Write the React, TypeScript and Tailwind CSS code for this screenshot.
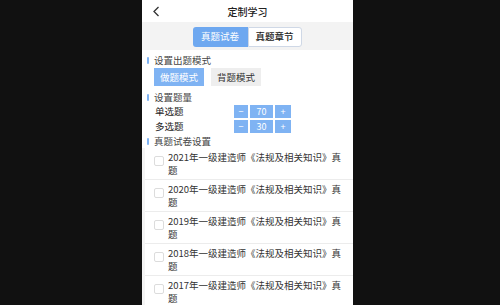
import React from "react";

const papers = [2021, 2020, 2019, 2018, 2017];

function Stepper({ value }: { value: number }) {
  return (
    <div className="flex gap-[2px] text-[9px] leading-[13px] text-white">
      <div className="w-[14px] h-[13px] bg-[#7fb3f3] text-center">−</div>
      <div className="w-[23px] h-[13px] bg-[#7fb3f3] text-center">{value}</div>
      <div className="w-[16px] h-[13px] bg-[#7fb3f3] text-center">+</div>
    </div>
  );
}

function Heading({ title }: { title: string }) {
  return (
    <div className="flex items-center h-[14px] pl-[5px]">
      <div className="w-[2px] h-[7px] bg-[#7fb3f3] rounded-sm" />
      <span className="ml-[5px] text-[9.5px] leading-[14px] text-[#444]">{title}</span>
    </div>
  );
}

export default function App() {
  return (
    <div
      className="w-[500px] h-[305px] bg-[#111] overflow-hidden pl-[142px]"
      style={{ fontFamily: '"Noto Sans CJK SC", "Noto Sans", sans-serif' }}
    >
      <div className="w-[211px] h-[305px] bg-white flex flex-col">
        {/* header */}
        <div className="relative h-[22px] shrink-0 flex items-center justify-center">
          <svg
            className="absolute left-[10px] top-[6px]"
            width="8"
            height="11"
            viewBox="0 0 8 11"
          >
            <path d="M6.5 1 L2 5.5 L6.5 10" stroke="#333" strokeWidth="1.3" fill="none" />
          </svg>
          <span className="text-[10px] font-medium text-[#222]">定制学习</span>
        </div>

        {/* tabs */}
        <div className="h-[28px] shrink-0 bg-[#f3f3f3] flex items-center justify-center">
          <div className="flex h-[20px] -ml-[1px] mt-[1px]">
            <div className="w-[55px] bg-[#6ea8f0] text-white text-[9.5px] flex items-center justify-center rounded-l-[3px]">
              真题试卷
            </div>
            <div className="w-[54px] bg-white border border-[#cfd8e6] text-[#222] font-medium text-[9.5px] flex items-center justify-center rounded-r-[3px]">
              真题章节
            </div>
          </div>
        </div>

        {/* mode */}
        <div className="pt-[3px] shrink-0">
          <Heading title="设置出题模式" />
          <div className="flex gap-[7px] pl-[12px] mt-[1px]">
            <div className="w-[50px] h-[18px] bg-[#7fb3f3] text-white text-[9.5px] flex items-center justify-center">
              做题模式
            </div>
            <div className="w-[50px] h-[18px] bg-[#eeeeee] text-[#333] text-[9.5px] flex items-center justify-center">
              背题模式
            </div>
          </div>
        </div>

        {/* counts */}
        <div className="mt-[4px] shrink-0">
          <Heading title="设置题量" />
          <div className="flex items-center h-[15px] pl-[13px]">
            <span className="w-[79px] text-[9.5px] text-[#222]">单选题</span>
            <Stepper value={70} />
          </div>
          <div className="flex items-center h-[15px] pl-[13px]">
            <span className="w-[79px] text-[9.5px] text-[#222]">多选题</span>
            <Stepper value={30} />
          </div>
        </div>

        <div className="shrink-0">
          <Heading title="真题试卷设置" />
        </div>

        {/* paper list */}
        <div className="flex-1 bg-[#f4f4f4] pl-[3px]">
          {papers.map((y) => (
            <div
              key={y}
              className="bg-white border-b border-[#ececec] flex pt-[3px] pb-[2px] pl-[9px] pr-[8px]"
            >
              <div className="w-[10px] h-[10px] mt-[5px] border border-[#dcdcdc] rounded-[2px] shrink-0" />
              <div className="ml-[4px] text-[9.5px] leading-[13px] text-[#333]">
                <div className="whitespace-nowrap">{y}年一级建造师《法规及相关知识》真</div>
                <div>题</div>
              </div>
            </div>
          ))}
        </div>
      </div>
    </div>
  );
}
